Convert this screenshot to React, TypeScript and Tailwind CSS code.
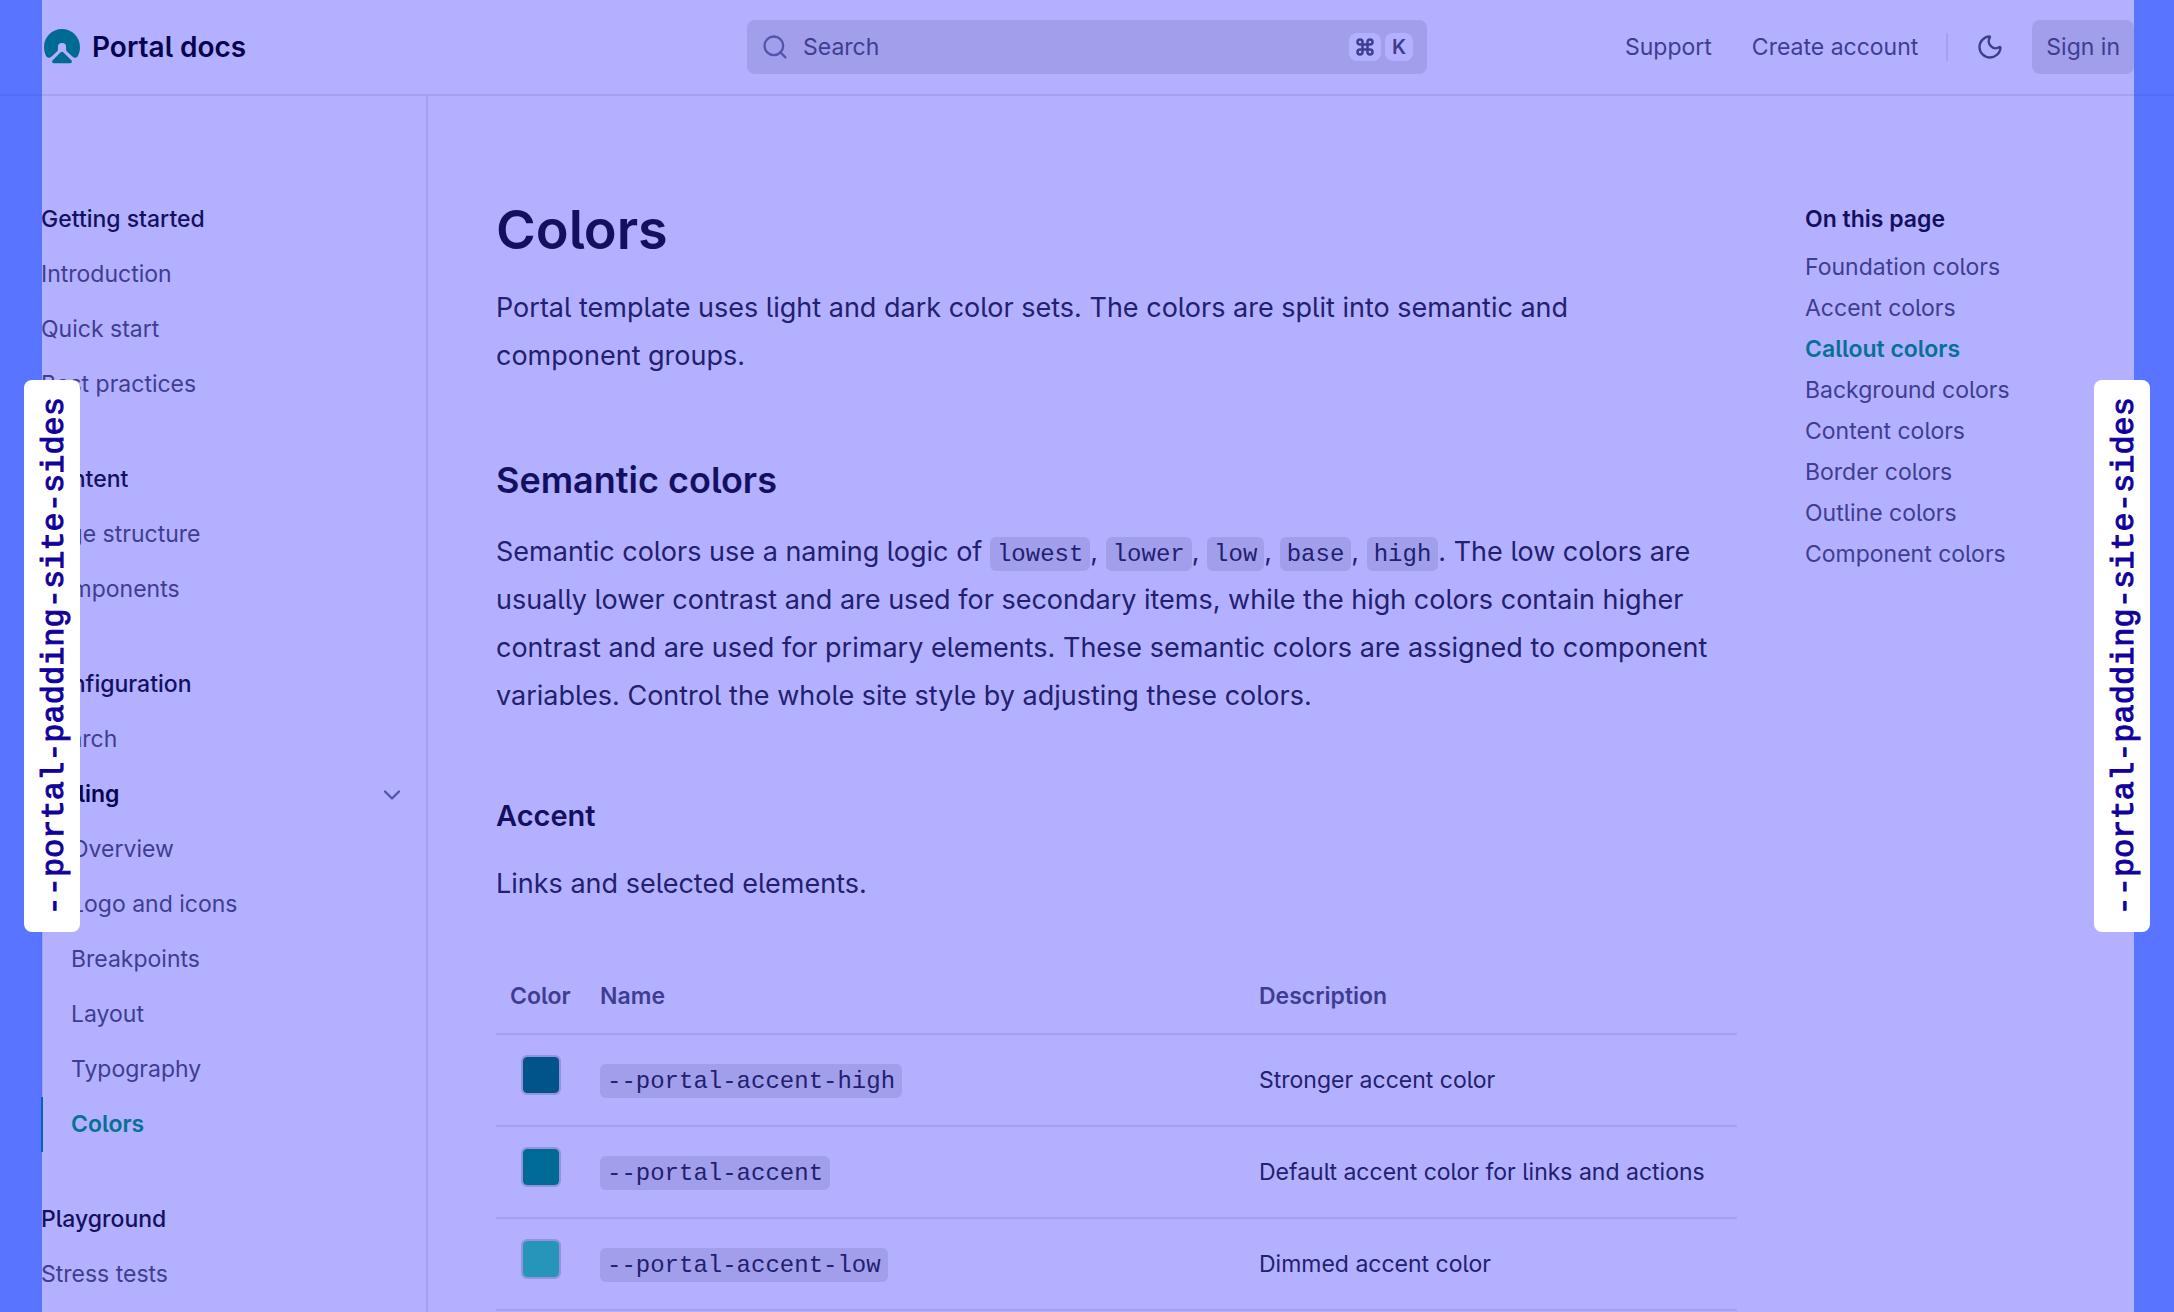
import React from "react";
import { Search, Moon, ChevronDown, Command } from "lucide-react";

type Item = { label: string; active?: boolean };
type Group = { title: string; items: Item[]; nested?: { title: string; items: Item[] } };

const groups: Group[] = [
  { title: "Getting started", items: [{ label: "Introduction" }, { label: "Quick start" }, { label: "Best practices" }] },
  { title: "Content", items: [{ label: "Page structure" }, { label: "Components" }] },
  {
    title: "Configuration",
    items: [{ label: "Search" }],
    nested: {
      title: "Styling",
      items: [
        { label: "Overview" },
        { label: "Logo and icons" },
        { label: "Breakpoints" },
        { label: "Layout" },
        { label: "Typography" },
        { label: "Colors", active: true },
      ],
    },
  },
  { title: "Playground", items: [{ label: "Stress tests" }] },
];

const toc: Item[] = [
  { label: "Foundation colors" },
  { label: "Accent colors" },
  { label: "Callout colors", active: true },
  { label: "Background colors" },
  { label: "Content colors" },
  { label: "Border colors" },
  { label: "Outline colors" },
  { label: "Component colors" },
];

const rows = [
  { swatch: "bg-[#00548a]", name: "--portal-accent-high", text: "Stronger accent color" },
  { swatch: "bg-[#006a96]", name: "--portal-accent", text: "Default accent color for links and actions" },
  { swatch: "bg-[#2596ba]", name: "--portal-accent-low", text: "Dimmed accent color" },
];

function Code({ children }: { children: React.ReactNode }) {
  return (
    <code className="rounded-md bg-[#a19fec] px-[7px] pt-1 pb-[3px] font-['Liberation_Mono',monospace] text-[24px] leading-none">
      {children}
    </code>
  );
}

function Logo() {
  return (
    <svg viewBox="0 0 36 36" className="size-9 text-[#006a96]" fill="currentColor" aria-hidden="true">
      <path d="M18 0C8 0 0 8 0 18c0 3.600.800 6.600 2.300 9.200c1 1.700 3.200 2 4.700.700L12.800 22.800c.800-.700 1.100-1.400 1.100-2.400V18a4.100 4.100 0 0 1 8.200 0v2.400c0 1 .300 1.700 1.100 2.400l5.800 5.100c1.500 1.300 3.700 1 4.700-.700C35.200 24.600 36 21.600 36 18C36 8 28 0 18 0Z" />
      <path d="M16.700 23.300L8.700 31.200C7.500 32.500 8.200 34.300 9.900 34.300H26.100C27.800 34.300 28.500 32.500 27.300 31.200L19.300 23.300C18.500 22.600 17.500 22.600 16.700 23.300Z" />
    </svg>
  );
}

function Measure({ side }: { side: "left" | "right" }) {
  return (
    <>
      <div className={side === "left" ? "absolute inset-y-0 left-0 w-[42px] bg-[#1d4dff]/60" : "absolute inset-y-0 right-0 w-10 bg-[#1d4dff]/60"} />
      <div
        className={
          side === "left"
            ? "absolute top-[380px] left-6 flex w-14 items-center justify-center rounded-lg bg-white py-[17px] pl-1.5"
            : "absolute top-[380px] right-6 flex w-14 items-center justify-center rounded-lg bg-white py-[17px] pl-1.5"
        }
      >
        <span className="rotate-180 whitespace-nowrap font-['Liberation_Mono',monospace] text-[32px] leading-10 text-[#12009c] [-webkit-text-stroke:1px_#12009c] [writing-mode:vertical-rl]">
          --portal-padding-site-sides
        </span>
      </div>
    </>
  );
}

export default function App() {
  return (
    <div className="relative h-screen overflow-hidden bg-[#b3b1ff] font-['Inter',sans-serif] text-[23px] text-[#3f3d92] [font-feature-settings:'cv05']">
      <header className="grid h-24 grid-cols-[1fr_680px_1fr] items-center border-b-2 border-[#a4a2f0] px-10">
        <a href="#" className="flex items-center gap-3 pl-1 text-[28px] font-semibold text-[#07044f]">
          <Logo />
          Portal docs
        </a>
        <label className="flex h-[54px] items-center gap-3.5 rounded-lg bg-[#a19fec] px-3.5">
          <Search className="size-7 text-[#5553ad]" strokeWidth={2} />
          <input
            aria-label="Search"
            placeholder="Search"
            className="min-w-0 flex-1 bg-transparent outline-none placeholder:text-[#3f3d92]"
          />
          <span className="flex gap-1 text-[20px] font-semibold">
            <kbd className="flex h-7 w-8 items-center justify-center rounded-lg bg-[#b3b1ff]">
              <Command className="size-5" strokeWidth={3} />
            </kbd>
            <kbd className="flex h-7 w-7 items-center justify-center rounded-lg bg-[#b3b1ff] font-['Inter',sans-serif]">K</kbd>
          </span>
        </label>
        <div className="flex items-center justify-end">
          <a href="#">Support</a>
          <a href="#" className="ml-10">Create account</a>
          <span className="ml-7 h-7 w-0.5 bg-[#a4a2f0]" />
          <button aria-label="Toggle theme" className="ml-7">
            <Moon className="size-7" strokeWidth={2} />
          </button>
          <button className="ml-7 h-[54px] rounded-lg bg-[#a19fec] px-3.5">Sign in</button>
        </div>
      </header>

      <div className="grid grid-cols-[428px_1fr_369px]">
        <nav className="flex min-h-[1216px] flex-col gap-10 border-r-2 border-[#a4a2f0] pt-24 pr-5 pl-[41px]">
          {groups.map((g) => (
            <section key={g.title}>
              <h2 className="leading-[55px] font-medium text-[#13105f]">{g.title}</h2>
              <ul>
                {g.items.map((i) => (
                  <li key={i.label}>
                    <a href="#" className="block leading-[55px]">{i.label}</a>
                  </li>
                ))}
                {g.nested && (
                  <li>
                    <button className="flex w-full items-center justify-between leading-[55px] font-semibold text-[#07044f]">
                      {g.nested.title}
                      <ChevronDown className="size-7 text-[#5553ad]" strokeWidth={2} />
                    </button>
                    <ul>
                      {g.nested.items.map((i) => (
                        <li key={i.label}>
                          <a
                            href="#"
                            className={
                              i.active
                                ? "block border-l-2 border-[#006a96] pl-7 leading-[55px] font-semibold text-[#067095]"
                                : "block border-l-2 border-[#a4a2f0] pl-7 leading-[55px]"
                            }
                          >
                            {i.label}
                          </a>
                        </li>
                      ))}
                    </ul>
                  </li>
                )}
              </ul>
            </section>
          ))}
        </nav>

        <main className="px-[68px] pt-[100px] text-[27px] leading-12 text-[#22206f]">
          <h1 className="text-[54px] leading-[68px] font-semibold text-[#13105f]">Colors</h1>
          <p className="mt-5 pr-10">
            Portal template uses light and dark color sets. The colors are split into semantic and component groups.
          </p>
          <h2 className="mt-19 text-[36px] leading-12 font-semibold text-[#13105f]">Semantic colors</h2>
          <p className="mt-6">
            Semantic colors use a naming logic of <Code>lowest</Code>, <Code>lower</Code>, <Code>low</Code>,{" "}
            <Code>base</Code>, <Code>high</Code>. The low colors are usually lower contrast and are used for secondary
            items, while the high colors contain higher contrast and are used for primary elements. These semantic
            colors are assigned to component variables. Control the whole site style by adjusting these colors.
          </p>
          <h3 className="mt-19 text-[29px] leading-10 font-semibold text-[#13105f]">Accent</h3>
          <p className="mt-6">Links and selected elements.</p>
          <table className="mt-[50px] w-full text-left text-[23px]">
            <thead>
              <tr className="h-[76px] border-b-2 border-[#a4a2f0] text-[#3f3d92]">
                <th className="w-[90px] pl-3.5 font-semibold">Color</th>
                <th className="pl-3.5 font-semibold">Name</th>
                <th className="w-[492px] pl-3.5 font-semibold">Description</th>
              </tr>
            </thead>
            <tbody>
              {rows.map((r) => (
                <tr key={r.name} className="h-[92px] border-b-2 border-[#a4a2f0]">
                  <td className="pb-2.5 pl-[25px]">
                    <span className={`block size-10 rounded-md border-2 border-[#9593dc] bg-clip-padding ${r.swatch}`} />
                  </td>
                  <td className="pl-3.5"><Code>{r.name}</Code></td>
                  <td className="pl-3.5">{r.text}</td>
                </tr>
              ))}
            </tbody>
          </table>
        </main>

        <aside className="pt-[107px]">
          <h2 className="font-semibold leading-8 text-[#13105f]">On this page</h2>
          <ul className="mt-3 leading-[41px]">
            {toc.map((t) => (
              <li key={t.label}>
                <a href="#" className={t.active ? "font-semibold text-[#067095]" : ""}>{t.label}</a>
              </li>
            ))}
          </ul>
        </aside>
      </div>

      <Measure side="left" />
      <Measure side="right" />
    </div>
  );
}
